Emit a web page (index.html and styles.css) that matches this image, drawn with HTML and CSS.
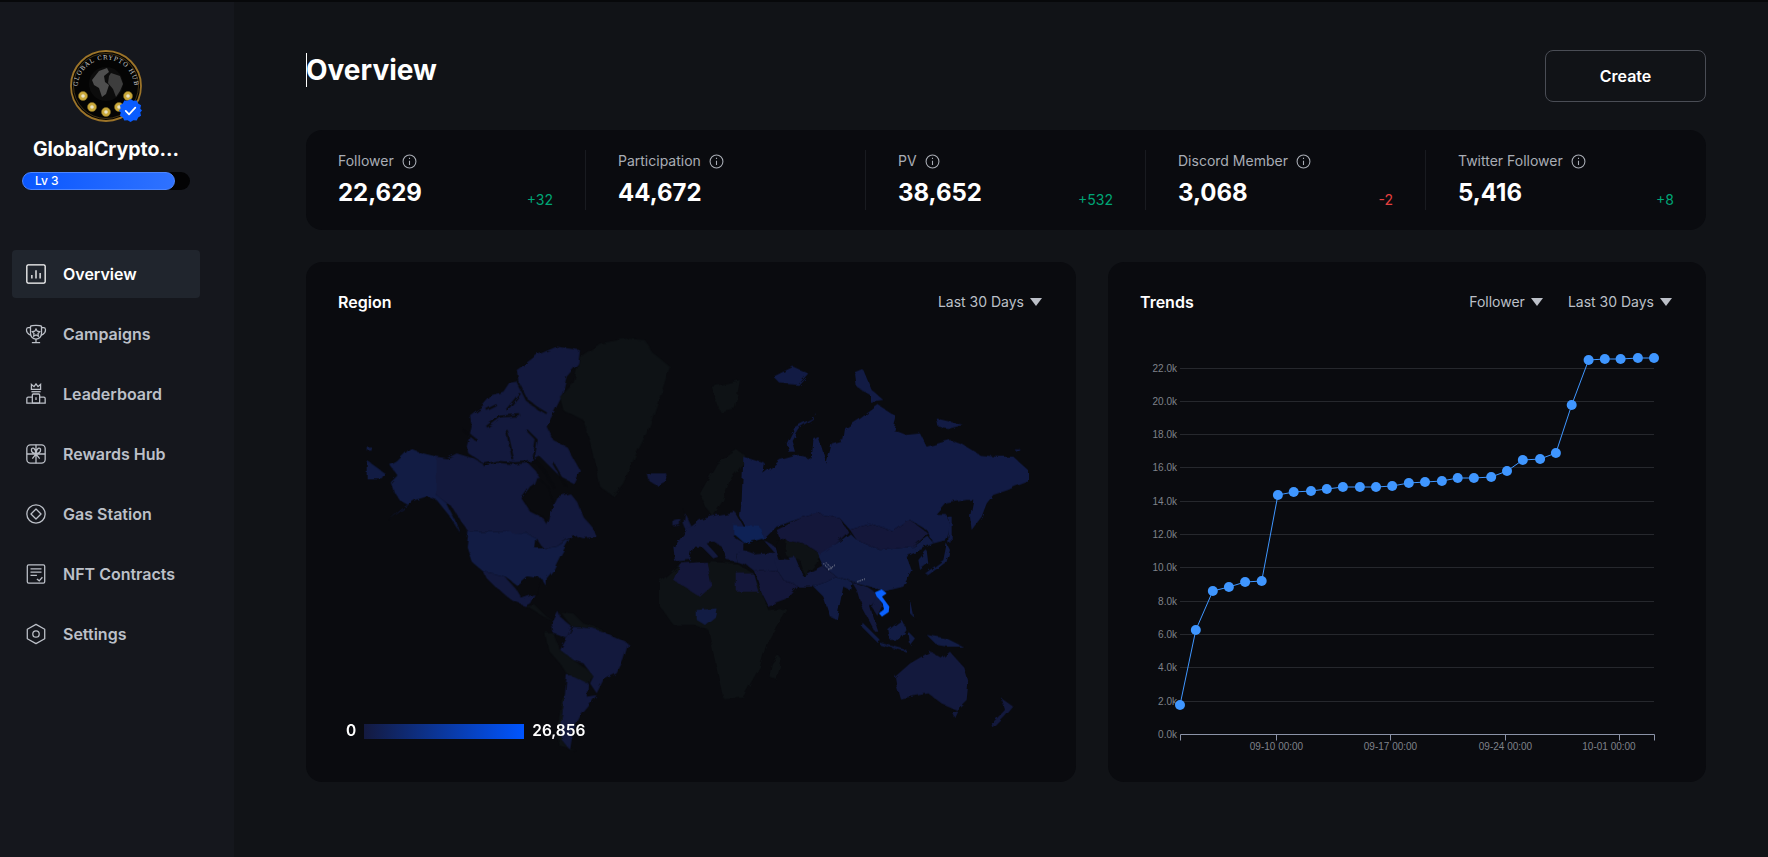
FILE: index.html
```html
<!DOCTYPE html>
<html lang="en">
<head>
    <meta charset="UTF-8">
    <meta name="viewport" content="width=device-width, initial-scale=1.0">
    <title>Overview</title>
    <link rel="stylesheet" href="styles.css">
</head>
<body>
    <aside class="sidebar">
        <div class="avatar">
            <svg class="logo" viewBox="0 0 72 72">
                <defs>
                    <path id="logoArc" d="M7.500 38a28.500 28.500 0 0 1 57 0"/>
                </defs>
                <circle cx="36" cy="36" r="35" fill="#040404" stroke="#9c7429" stroke-width="1.800"/>
                <circle cx="36" cy="36" r="32.500" fill="none" stroke="#7c5f24" stroke-width=".5"/>
                <text class="logo-text"><textPath href="#logoArc" startOffset="50%" text-anchor="middle">GLOBAL CRYPTO HUB</textPath></text>
                <circle cx="36" cy="34" r="17" fill="#0c0c0c"/>
                <path d="M22 30l7-9 8-3 2 4-5 4 1 6 4 3-3 9-4 3-3-9-5-3z" fill="#4e4e4e"/>
                <path d="M41 23l9 3 3 8-3 7-4 6-3-8-5-6 1-7z" fill="#3d3d3d"/>
                <g fill="#c9a83a" stroke="#7d6720" stroke-width=".6">
                    <circle cx="13" cy="46" r="4.500"/>
                    <circle cx="22" cy="57" r="4.500"/>
                    <circle cx="36" cy="62" r="4.500"/>
                    <circle cx="49" cy="57" r="4.500"/>
                    <circle cx="58" cy="46" r="4.500"/>
                </g>
                <g fill="#e9e3c8">
                    <circle cx="13" cy="46" r="1.800"/>
                    <circle cx="22" cy="57" r="1.800"/>
                    <circle cx="36" cy="62" r="1.800"/>
                    <circle cx="49" cy="57" r="1.800"/>
                    <circle cx="58" cy="46" r="1.800"/>
                </g>
            </svg>
            <svg class="badge" viewBox="0 0 24 24">
                <path d="M12 0l3 1.800 3.500-.3 1.500 3.200 3 1.800-.8 3.400L24 12l-1.800 2.100.8 3.400-3 1.800-1.500 3.200-3.500-.3L12 24l-3-1.800-3.500.3L4 19.300l-3-1.800.8-3.400L0 12l1.800-2.100L1 6.500l3-1.800 1.500-3.200 3.500.3z" fill="#0a5cff"/>
                <path d="M7 12.500l3.500 3.500 6.500-7" fill="none" stroke="#fff" stroke-width="1.800" stroke-linecap="round" stroke-linejoin="round"/>
            </svg>
        </div>
        <div class="profile-name">GlobalCrypto...</div>
        <div class="level"><div class="level-fill">Lv 3</div></div>

        <nav class="nav">
            <a class="nav-item active">
                <svg class="nav-icon" viewBox="0 0 24 24"><rect x="2" y="2" width="20" height="20" rx="1.500"/><path d="M7.500 13v4M12 8v9M16.500 11v6"/></svg>
                Overview
            </a>
            <a class="nav-item">
                <svg class="nav-icon" viewBox="0 0 24 24"><path d="M6 3.500c1.500-1.200 10.500-1.200 12 0v8a6 6 0 0 1-12 0z"/><path d="M6 5H3.500C1.500 5 1 8 2.500 10.500 3.500 12 5 13 6.500 13.500M18 5h2.500c2 0 2.500 3 1 5.500-1 1.500-2.500 2.500-4 3M12 17.500V21M7.500 21.500h9"/><path d="M12 6.500l1.400 2.500 2.600.5-1.800 2 .3 2.800-2.500-1.200-2.500 1.200.3-2.800-1.800-2 2.600-.5z"/></svg>
                Campaigns
            </a>
            <a class="nav-item">
                <svg class="nav-icon" viewBox="0 0 24 24"><path d="M7 1.500l2.800 2.500L12 1l2.200 3L17 1.500V7H7z"/><path d="M7 9.500h10"/><rect x="8" y="12" width="8" height="10" rx="1"/><path d="M8 15.500H3.500A1.500 1.500 0 0 0 2 17v5h20v-5a1.500 1.500 0 0 0-1.500-1.500H16M12 15.500v3"/></svg>
                Leaderboard
            </a>
            <a class="nav-item">
                <svg class="nav-icon" viewBox="0 0 24 24"><rect x="2" y="2" width="20" height="20" rx="4"/><path d="M2 12h20M12 2v20M12 11c-3 0-5-1-5-3.500S10.500 4 12 11c1.500-7 5-6 5-3.500S15 11 12 11zM12 12l-4 5M12 12l4 5"/></svg>
                Rewards Hub
            </a>
            <a class="nav-item">
                <svg class="nav-icon" viewBox="0 0 24 24"><circle cx="12" cy="12" r="10"/><path d="M12 6.500l5.500 5.500-5.500 5.500L6.500 12z" stroke-linejoin="round"/></svg>
                Gas Station
            </a>
            <a class="nav-item">
                <svg class="nav-icon" viewBox="0 0 24 24"><rect x="2.500" y="2" width="19" height="20" rx="1.500"/><path d="M6 6.500h12M6 10h12M6 13.500h7M13 17.500l2.500 2 3.500-4"/></svg>
                NFT Contracts
            </a>
            <a class="nav-item">
                <svg class="nav-icon" viewBox="0 0 24 24"><path d="M12 1.500l9.500 5.300v10.400L12 22.500l-9.500-5.300V6.800z" stroke-linejoin="round"/><circle cx="12" cy="12" r="3.500"/></svg>
                Settings
            </a>
        </nav>
    </aside>

    <main class="content">
        <header class="page-head">
            <h1 class="page-title">Overview</h1>
            <button class="create-btn">Create</button>
        </header>

        <section class="stats">
            <div class="stat">
                <div class="stat-label">Follower <svg class="info" viewBox="0 0 14 14"><circle cx="7" cy="7" r="6"/><path d="M7 6.200v4M7 3.600v1"/></svg></div>
                <div class="stat-row"><span class="stat-value">22,629</span><span class="delta up">+32</span></div>
            </div>
            <div class="stat">
                <div class="stat-label">Participation <svg class="info" viewBox="0 0 14 14"><circle cx="7" cy="7" r="6"/><path d="M7 6.200v4M7 3.600v1"/></svg></div>
                <div class="stat-row"><span class="stat-value">44,672</span></div>
            </div>
            <div class="stat">
                <div class="stat-label">PV <svg class="info" viewBox="0 0 14 14"><circle cx="7" cy="7" r="6"/><path d="M7 6.200v4M7 3.600v1"/></svg></div>
                <div class="stat-row"><span class="stat-value">38,652</span><span class="delta up">+532</span></div>
            </div>
            <div class="stat">
                <div class="stat-label">Discord Member <svg class="info" viewBox="0 0 14 14"><circle cx="7" cy="7" r="6"/><path d="M7 6.200v4M7 3.600v1"/></svg></div>
                <div class="stat-row"><span class="stat-value">3,068</span><span class="delta down">-2</span></div>
            </div>
            <div class="stat">
                <div class="stat-label">Twitter Follower <svg class="info" viewBox="0 0 14 14"><circle cx="7" cy="7" r="6"/><path d="M7 6.200v4M7 3.600v1"/></svg></div>
                <div class="stat-row"><span class="stat-value">5,416</span><span class="delta up">+8</span></div>
            </div>
        </section>

        <section class="panels">
            <div class="panel region">
                <div class="panel-head">
                    <h2 class="panel-title">Region</h2>
                    <div class="filters"><span class="filter">Last 30 Days</span></div>
                </div>
                <svg class="map" viewBox="0 0 2160 1320">
                    <defs>
                        <!-- roughens the hand drawn coastlines -->
                        <filter id="rough" x="0" y="0" width="2160" height="1320" filterUnits="userSpaceOnUse" color-interpolation-filters="sRGB">
                            <feTurbulence type="fractalNoise" baseFrequency=".035" numOctaves="3" seed="4"/>
                            <feDisplacementMap in="SourceGraphic" scale="16"/>
                        </filter>
                    </defs>
                    <g filter="url(#rough)">
                        <!-- americas, coordinates are 3x page pixels -->
                        <g class="land-blue">
                            <path class="usa" d="M290 380V495L320 520 345 570 360 610 330 560 290 510 260 500 225 510 195 530 145 572 205 525 180 512 165 490 155 460 175 440 150 405 170 395 210 355 250 370Z"/>
                            <path class="usa" d="M80 390L135 430 125 445 80 445ZM80 350H95V362H80Z"/>
                            <path d="M290 380L320 385 350 370 400 385 435 405 470 395 520 400 560 395 585 420 600 450 570 470 545 505 570 545 610 565 622 585 632 545 640 520 650 500 690 490 715 520 730 560 755 590 770 620 730 625 700 615 650 650 610 655 590 625 560 608 385 605 360 570 335 530 300 505 290 495Z"/>
                            <path class="usa" d="M385 605L560 608 590 625 585 655 615 655 650 650 690 625 660 680 640 720 620 745 620 770 605 745 560 740 530 765 495 740 460 730 430 725 395 695 380 650Z"/>
                            <path d="M430 725L460 730 495 740 530 780 545 805 585 790 570 820 555 828 520 815 490 790 465 770 440 745Z"/>
                            <path d="M380 350L395 290 390 255 425 230 455 195 490 185 510 155 535 150 530 120 590 75 650 50 720 60 715 100 680 140 665 200 640 250 620 290 640 330 680 350 720 420 700 460 660 440 620 400 600 380 560 400 500 395 430 400 385 370Z"/>
                            <path d="M655 845L635 880 640 910 680 925 695 890 660 860Z"/>
                            <path d="M680 925L700 890 760 895 790 905 865 940 850 990 830 1030 790 1050 770 1090 750 1060 760 1040 730 1000 700 990 660 960Z"/>
                            <path d="M680 1035L730 1035 745 1060 740 1100 770 1095 745 1130 720 1160 700 1200 690 1260 665 1230 665 1160 675 1090Z"/>
                            <path d="M920 430L980 430 985 450 950 468 925 450Z"/>
                            <path d="M1020 520L1040 560 1060 600 1040 605 1030 580 1035 550ZM1000 570L1020 565 1020 585 1000 590Z"/>
                        </g>
                        <g class="land-dark">
                            <path d="M720 80L780 40 860 25 915 30 940 70 990 110 960 200 925 300 890 370 850 460 820 500 780 470 760 370 730 270 670 240 660 200 700 160Z"/>
                            <path d="M555 828L585 825 620 860 640 870 610 860 570 835Z"/>
                            <path d="M660 845L700 850 730 880 780 895 790 905 760 895 700 890 695 890Z"/>
                            <path d="M615 910L640 910 660 960 700 990 745 1020 760 1040 740 1060 680 1030 660 1000 625 960Z"/>
                            <path d="M665 1110L675 1090 665 1160 665 1230 690 1260 710 1262 660 1250 650 1210Z"/>
                        </g>
                        <path class="water" d="M590 440L625 470 640 520 625 580 610 560 570 540 545 505 580 465ZM530 765L560 740 605 745 590 790 545 805 530 780Z"/>
                        <path class="channels" d="M440 290L480 260 540 255M570 220L620 250M410 330L370 300M500 300L520 390M560 300L590 330 580 390M540 190L500 240M430 405L470 395 520 400 590 395 620 430 640 470M440 240L470 225M530 150L560 210 600 240M640 400L680 470"/>

                        <!-- old world -->
                        <g transform="translate(1020 0)">
                            <g class="land-dark">
                                <path d="M-60 755L0 700 80 695 170 700 220 730 265 840 320 835 260 940 240 1010 190 1100 130 1105 115 1040 85 900 40 885-20 885-60 830Z"/>
                                <path d="M295 975L305 990 290 1050 268 1040 275 1000Z"/>
                                <path d="M60 490L110 400 170 360 195 375 190 400 150 450 130 510 100 560 75 530Z"/>
                                <path d="M95 170L180 150 165 235 120 245Z"/>
                                <path d="M305 630L340 635 380 645 420 670 410 700 375 740 360 690 320 680 300 660Z"/>
                                <path d="M470 740L515 755 480 755Z"/>
                            </g>
                            <g class="land-blue">
                                <path d="M-10 640L20 600 60 570 110 555 165 545 190 590 160 620 195 640 190 665 165 670 170 695 140 690 125 650 100 635 80 640 115 680 100 685 65 650 40 650 30 690-15 695-20 650Z"/>
                                <path class="russia" d="M190 380L255 400 250 430 270 415 300 390 355 375 395 385 400 330 415 320 440 400 455 340 490 330 495 295 535 270 595 225 650 260 640 300 680 315 720 310 740 350 810 330 850 345 900 375 950 380 1000 380 1044 420V455L1005 470 985 480 940 495 920 520 905 560 875 600 870 560 880 510 860 510 800 520 770 555 800 555 810 590 800 630 760 640 740 600 690 570 640 605 575 580 510 600 480 565 410 550 360 565 290 590 250 630 195 590 180 560 185 510Z"/>
                                <path class="russia" d="M405 245L395 265 345 290 320 340 325 365 345 365 335 330 355 295 400 265ZM280 140L340 110 385 130 355 165 300 160ZM525 130L550 120 575 180 610 210 570 215 570 195 530 170ZM770 265L850 285 810 295 775 290ZM1000 355H1020L1010 365ZM805 560L815 560 815 640 805 640Z"/>
                                <path class="ukraine" d="M160 585L240 590 250 625 195 640 160 610Z"/>
                                <path class="usa" d="M410 665L470 640 510 610 530 630 600 660 700 650 745 620 760 640 720 660 680 680 695 720 670 770 610 785 570 770 520 755 470 740 430 710Z"/>
                                <path d="M165 670L195 660 280 665 250 630 285 650 295 690 290 720 225 725 200 705 170 695Z"/>
                                <path d="M285 690L345 680 370 740 430 710 470 740 440 755 400 770 355 770 310 750 290 720Z"/>
                                <path class="usa" d="M400 770L440 755 470 740 515 755 510 780 490 770 470 870 450 860 430 800Z"/>
                                <path d="M515 755L560 770 590 790 590 810 570 830 595 905 585 905 545 830 530 780Z"/>
                                <path d="M590 795L610 830 595 860 575 830Z"/>
                                <path class="usa" d="M548 878L600 930 590 935 545 890ZM600 938L680 960V965L600 945ZM625 900L665 870 680 900 660 930 630 930ZM685 905L705 925 690 945ZM740 915L800 925 850 950 800 950 770 945ZM690 810L700 860 715 875 690 850ZM735 730L790 690 800 640 810 660 800 695 745 735ZM715 690L740 660 745 700 720 720Z"/>
                                <path d="M645 1040L690 1000 750 965 785 985 810 965 850 1010 865 1060 860 1110 830 1140 785 1120 745 1090 695 1100 660 1105 650 1070ZM815 1145H835L825 1165ZM965 1105L1000 1130 975 1160 940 1195 935 1180 975 1140Z"/>
                            </g>
                            <g class="land-purple">
                                <path d="M-20 750L0 700 80 695 95 770 60 800Z"/>
                                <path d="M170 730H220L235 785H170Z"/>
                                <path d="M290 600L360 565 410 550 480 565 505 605 470 640 420 670 380 645 340 635 300 630Z"/>
                                <path d="M510 600L575 580 640 605 690 570 745 610 700 650 600 660 530 630Z"/>
                                <path d="M225 725L290 720 310 750 355 770 320 810 265 830 245 790Z"/>
                            </g>
                            <path class="usa" d="M50 840L110 835 105 860 75 885 50 870Z"/>
                            <path class="water" d="M300 625L320 630 315 670 330 690 300 685 285 650ZM190 640L250 630 280 665 220 670 190 660Z"/>
                        </g>
                    </g>
                    <g transform="translate(1020 0)">
                        <path class="vietnam" d="M585 787L605 778 620 790 606 800 628 830 626 846 606 860 597 850 612 838 608 820 590 800Z"/>
                        <path class="dashes" d="M430 700L450 720M438 698L458 718M445 720L465 705M532 755L555 747"/>
                    </g>
                </svg>
                <div class="legend">
                    <span>0</span>
                    <div class="legend-bar"></div>
                    <span>26,856</span>
                </div>
            </div>

            <div class="panel trends">
                <div class="panel-head">
                    <h2 class="panel-title">Trends</h2>
                    <div class="filters">
                        <span class="filter">Follower</span>
                        <span class="filter">Last 30 Days</span>
                    </div>
                </div>
                <!-- viewBox uses page coordinates -->
                <svg class="chart" viewBox="1120 340 560 420">
                    <defs>
                        <marker id="dot" markerUnits="userSpaceOnUse" markerWidth="12" markerHeight="12" refX="6" refY="6">
                            <circle cx="6" cy="6" r="5" fill="#3f96ff"/>
                        </marker>
                    </defs>
                    <path class="grid" d="M1180 368.500H1654M1180 401.500H1654M1180 434.500H1654M1180 467.500H1654M1180 501.500H1654M1180 534.500H1654M1180 567.500H1654M1180 601.500H1654M1180 634.500H1654M1180 667.500H1654M1180 701.500H1654"/>
                    <path class="axis" d="M1180.500 740.500V734.500H1654.500V740.500M1276.500 734.500V740.500M1390.500 734.500V740.500M1505.500 734.500V740.500M1619.500 734.500V740.500"/>
                    <g class="y-labels">
                        <text x="1177" y="372">22.0k</text>
                        <text x="1177" y="405">20.0k</text>
                        <text x="1177" y="438">18.0k</text>
                        <text x="1177" y="471">16.0k</text>
                        <text x="1177" y="505">14.0k</text>
                        <text x="1177" y="538">12.0k</text>
                        <text x="1177" y="571">10.0k</text>
                        <text x="1177" y="605">8.0k</text>
                        <text x="1177" y="638">6.0k</text>
                        <text x="1177" y="671">4.0k</text>
                        <text x="1177" y="705">2.0k</text>
                        <text x="1177" y="738">0.0k</text>
                    </g>
                    <g class="x-labels">
                        <text x="1276.500" y="750">09-10 00:00</text>
                        <text x="1390.500" y="750">09-17 00:00</text>
                        <text x="1505.500" y="750">09-24 00:00</text>
                        <text x="1609" y="750">10-01 00:00</text>
                    </g>
                    <polyline class="line" points="1180,705 1195.800,630 1212.800,591 1228.900,587 1245.100,582 1261.700,581 1277.900,495 1293.700,492 1311,491 1326.800,489 1342.900,487 1359.900,487 1376,487 1392.200,486 1408.800,483 1425,482 1441.900,481 1457.700,478 1473.900,478 1491.200,477 1507,471 1522.800,460 1540.100,459 1555.900,453 1571.700,405 1588.600,360 1604.800,359 1620.600,359 1637.900,358 1654,358"/>
                </svg>
            </div>
        </section>
    </main>
</body>
</html>
```

FILE: styles.css
```css
* {
    box-sizing: border-box;
}

body {
    display: flex;
    min-height: 857px;
    margin: 0;
    border-top: 2px solid #07080a;
    background-color: #111317;
    color: #fff;
    font-family: Inter, "Liberation Sans", sans-serif;
}

/* sidebar */
.sidebar {
    flex: 0 0 234px;
    padding: 48px 34px 0 12px;
    background-color: #15171d;
}

.avatar {
    position: relative;
    width: 72px;
    height: 72px;
    margin: 0 auto;
}

.logo {
    display: block;
    width: 72px;
    height: 72px;
}

.logo-text {
    fill: #cfcfcf;
    font-family: "DejaVu Serif", serif;
    font-size: 6px;
    letter-spacing: .9px;
}

.badge {
    position: absolute;
    right: 0;
    bottom: 0;
    width: 23px;
    height: 23px;
}

.profile-name {
    margin-top: 13px;
    font-size: 19.500px;
    font-weight: 700;
    line-height: 28px;
    text-align: center;
}

.level {
    width: 168px;
    height: 18px;
    margin: 9px 0 0 10px;
    border-radius: 9px;
    background-color: #030304;
}

.level-fill {
    width: 153px;
    height: 18px;
    padding-left: 12px;
    border: 1px solid #4d86ff;
    border-radius: 9px;
    background: linear-gradient(90deg, #0a57ff, #2f72ff);
    font-size: 12px;
    font-weight: 500;
    line-height: 16px;
}

.nav {
    display: flex;
    flex-direction: column;
    gap: 12px;
    margin-top: 60px;
}

.nav-item {
    display: flex;
    align-items: center;
    gap: 16px;
    height: 48px;
    padding-left: 13px;
    border-radius: 4px;
    color: #bcc0c8;
    font-size: 16px;
    font-weight: 600;
}

.nav-item.active {
    background-color: #20252d;
    color: #fff;
}

.nav-icon {
    flex: none;
    width: 22px;
    height: 22px;
    fill: none;
    stroke: currentColor;
    stroke-width: 1.400;
}

/* main */
.content {
    flex: 1;
    padding: 48px 62px 0 72px;
}

.page-head {
    display: flex;
    justify-content: space-between;
    align-items: flex-start;
    height: 52px;
}

.page-title {
    margin: 3px 0 0;
    border-left: 1px solid #fff;
    font-size: 28px;
    font-weight: 700;
    line-height: 34px;
    text-indent: -1px;
}

.create-btn {
    width: 161px;
    height: 52px;
    border: 1px solid #4a4d55;
    border-radius: 8px;
    background: none;
    color: #fff;
    font-family: inherit;
    font-size: 16px;
    font-weight: 600;
}

.stats {
    display: flex;
    height: 100px;
    margin-top: 28px;
    padding: 20px 32px;
    border-radius: 16px;
    background-color: #0a0b0f;
}

.stat {
    flex: 0 0 248px;
    padding-right: 32px;
    margin-right: 32px;
    border-right: 1px solid #191b20;
}

.stat:last-child {
    flex: 1;
    padding-right: 0;
    margin-right: 0;
    border-right: none;
}

.stat-label {
    display: flex;
    align-items: center;
    gap: 8px;
    color: #a9adb5;
    font-size: 14px;
    line-height: 22px;
}

.info {
    width: 15px;
    height: 15px;
    fill: none;
    stroke: #a9adb5;
    stroke-width: 1;
}

.stat-row {
    display: flex;
    justify-content: space-between;
    align-items: flex-end;
    margin-top: 5px;
}

.stat-value {
    font-size: 24px;
    font-weight: 700;
    line-height: 32px;
}

.delta {
    font-size: 14px;
    line-height: 18px;
}

.delta.up {
    color: #00a676;
}

.delta.down {
    color: #e5403f;
}

.panels {
    display: flex;
    gap: 32px;
    margin-top: 32px;
}

.panel {
    position: relative;
    height: 520px;
    border-radius: 16px;
    background-color: #0a0b0f;
}

.region {
    flex: 0 0 770px;
}

.trends {
    flex: 1;
}

.panel-head {
    display: flex;
    justify-content: space-between;
    align-items: center;
    padding: 28px 32px 0;
}

.panel-title {
    margin: 0;
    font-size: 16px;
    font-weight: 600;
    line-height: 24px;
}

.filters {
    display: flex;
    gap: 25px;
    margin-right: 2px;
}

.filter {
    display: flex;
    align-items: center;
    gap: 6px;
    color: #bcc0c8;
    font-size: 14px;
    line-height: 24px;
}

.filter::after {
    content: "";
    border-top: 8px solid #bcc0c8;
    border-left: 6px solid transparent;
    border-right: 6px solid transparent;
}

/* map */
.map {
    display: block;
    width: 720px;
    height: 440px;
    margin: 16px 0 0 34px;
}

.land-blue {
    fill: #13193d;
}

.land-blue .russia {
    fill: #121b44;
}

.land-blue .ukraine {
    fill: #0e2256;
}

.usa {
    fill: #121c44;
}

.land-dark {
    fill: #0e1215;
}

.land-purple {
    fill: #14173a;
}

.water {
    fill: #0a0b0f;
}

.channels {
    fill: none;
    stroke: #0a0b0f;
    stroke-width: 6;
}

.vietnam {
    fill: #0a62ff;
}

.dashes {
    fill: none;
    stroke: #c9c9c9;
    stroke-width: 2;
    stroke-dasharray: 4 3;
}

.legend {
    position: absolute;
    left: 40px;
    bottom: 40px;
    display: flex;
    align-items: center;
    gap: 8px;
    font-size: 15.500px;
    font-weight: 600;
    line-height: 22px;
}

.legend-bar {
    width: 160px;
    height: 15px;
    background: linear-gradient(90deg, #141a3f, #0055ff);
}

/* chart */
.chart {
    display: block;
    width: 560px;
    height: 420px;
    margin: 26px 0 0 12px;
}

.grid {
    fill: none;
    stroke: #26282d;
    stroke-width: 1;
}

.axis {
    fill: none;
    stroke: #8b93a7;
    stroke-width: 1;
}

.y-labels text,
.x-labels text {
    fill: #7f828a;
    font-family: "Liberation Sans", sans-serif;
    font-size: 10px;
}

.y-labels text {
    text-anchor: end;
}

.x-labels text {
    text-anchor: middle;
}

.line {
    fill: none;
    stroke: #3f96ff;
    stroke-width: 1;
    marker-start: url(#dot);
    marker-mid: url(#dot);
    marker-end: url(#dot);
}
```
